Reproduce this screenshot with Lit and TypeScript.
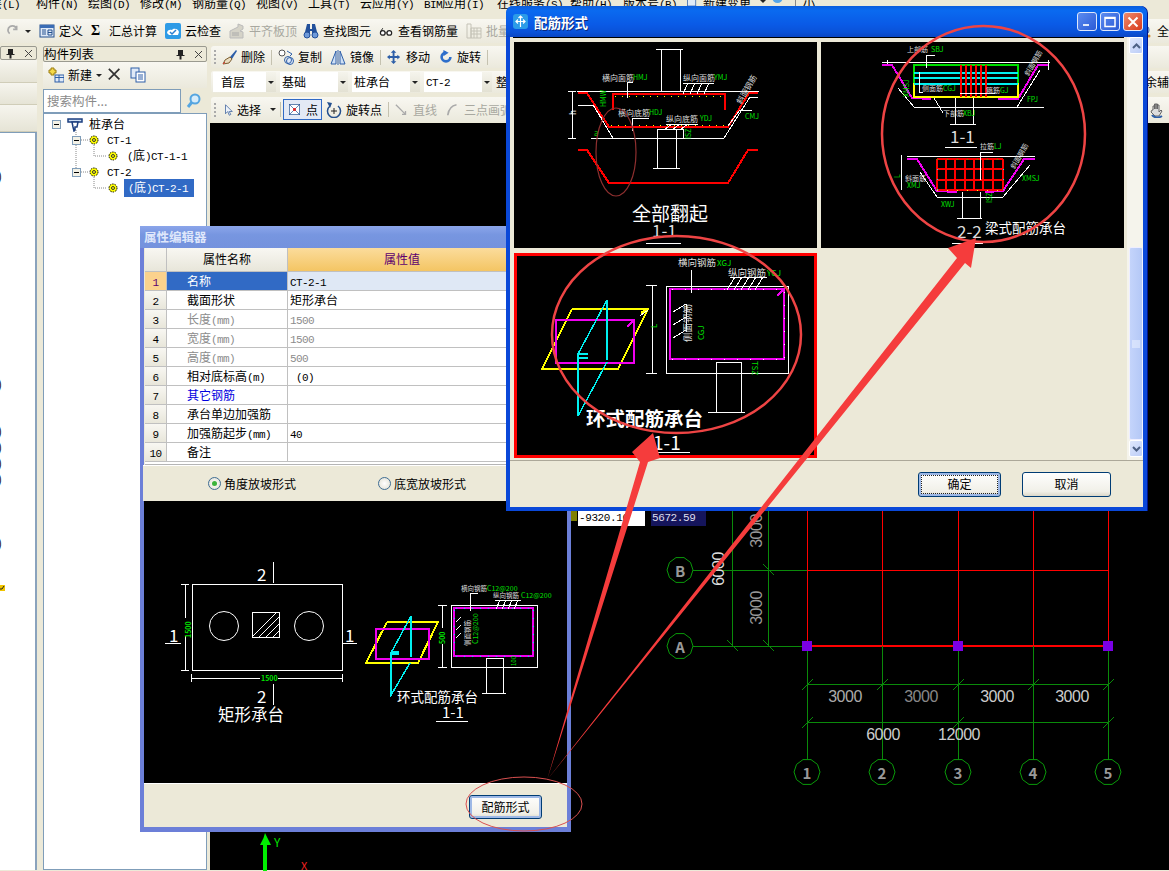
import { LitElement, html, css, svg } from 'lit';
import { customElement } from 'lit/decorators.js';

const CJK = '"Noto Sans CJK SC", "Liberation Sans", sans-serif';

// latin runs are half width in the original bitmap font
const txt = (s: string) =>
  s.split(/([\x00-\x7f]+)/).filter(Boolean).map((r) =>
    /^[\x00-\x7f]/.test(r) ? html`<span class="lat">${r}</span>` : r);

const pl = (p: string, c = '#fff', w = 1) =>
  svg`<polyline points=${p} fill="none" stroke=${c} stroke-width=${w} />`;

const dots = (p: string, c = '#fff', gap = 6) =>
  svg`<polyline points=${p} fill="none" stroke=${c} stroke-width="1" stroke-dasharray="1 ${gap}" />`;

const box = (x: number, y: number, w: number, h: number, c = '#fff', sw = 1) =>
  svg`<rect x=${x} y=${y} width=${w} height=${h} fill="none" stroke=${c} stroke-width=${sw} />`;

const lbl = (x: number, y: number, s: string, c = '#fff', size = 8, rot = 0, weight = 'normal') =>
  svg`<text x=${x} y=${y} fill=${c} font-size=${size} font-weight=${weight} dominant-baseline="central"
    transform=${rot ? `rotate(${rot} ${x} ${y})` : ''}>${s}</text>`;

const G = '#00e000';
const M = '#f000f0';
const C = '#00f0f0';
const Y = '#ffff00';
const R = '#ff0000';

const gon = (cx: number, cy: number, r: number, n = 10) =>
  Array.from({ length: n }, (_, i) => {
    const a = (i / n) * Math.PI * 2 + Math.PI / n;
    return `${(cx + Math.sin(a) * r).toFixed(1)},${(cy + Math.cos(a) * r).toFixed(1)}`;
  }).join(' ');

const icons: Record<string, unknown> = {
  redo: svg`<path d="M3 11a5 5 0 1 1 8-5M11 2v4H7" fill="none" stroke="#aaa" stroke-width="2"/>`,
  define: svg`<rect x="1" y="2" width="14" height="12" fill="#dfe9f7" stroke="#24508f"/><rect x="1" y="2" width="14" height="3" fill="#3a6cb5"/><path d="M3 7h4M3 9h4M3 11h4M9 7h4v5H9zM9 9.500h4" stroke="#24508f" fill="none"/>`,
  cloud: svg`<rect x="0" y="0" width="16" height="16" rx="2" fill="#2e9be6"/><path d="M2 10c0-3 3-4 5-3 1-2 6-2 7 2l-1 3H4z" fill="#fff"/><path d="M5 9l2 2 4-4" stroke="#2b7fd0" stroke-width="1.500" fill="none"/>`,
  flat: svg`<path d="M1 15V8l8-4v-3l5 2v3l-3 2 3 1v6z" fill="#d5d3c8" stroke="#bbb"/><path d="M3 10h7M3 12h7" stroke="#aaa"/>`,
  find: svg`<path d="M4 1h3v5h2V1h3l3 12h-6V8H7v5H1z" fill="#22509b"/><circle cx="4" cy="12" r="3" fill="#6f9ad8" stroke="#22509b"/><circle cx="12" cy="12" r="3" fill="#6f9ad8" stroke="#22509b"/>`,
  glasses: svg`<circle cx="4" cy="10" r="2.500" fill="#fff" stroke="#222" stroke-width="1.300"/><circle cx="11" cy="10" r="2.500" fill="#fff" stroke="#222" stroke-width="1.300"/><path d="M6.500 10h2M1.500 9 4 5" stroke="#222" fill="none"/>`,
  batch: svg`<path d="M1 1h4v14H1zM5 5h10v10H5zM5 8h10M5 11h10M8 5v10M11 5v10" fill="none" stroke="#c4c2b6"/>`,
  brush: svg`<path d="M9 8l6-7 1 1-5 8z" fill="#2e5fa8"/><path d="M9 8l2 2-3 4-6 1 2-4z" fill="#e9dcc0" stroke="#7b5c2e"/><path d="M2 15l2-2" stroke="#d33"/>`,
  copy: svg`<circle cx="4" cy="4" r="3" fill="#fff" stroke="#555"/><circle cx="12" cy="12" r="3.500" fill="#dfe9f7" stroke="#2e5fa8"/><circle cx="10" cy="11" r="3.500" fill="none" stroke="#2e5fa8"/><path d="M9 2l5 3-2 2" fill="none" stroke="#2e5fa8"/>`,
  mirror: svg`<path d="M6 2 1 15h5zM10 2l5 13h-5z" fill="#cfe0f5" stroke="#2e5fa8"/><path d="M8 1v15" stroke="#2e5fa8"/>`,
  move: svg`<path d="M7 0l3 3H8v3.500h3V5l3 2.500L11 10V8.500H8V12h2l-3 3-3-3h2V8.500H3V10L0 7.500 3 5v1.500h3V3H4z" fill="#2e5fa8"/>`,
  rotate: svg`<path d="M13 8a5 5 0 1 1-5-5" fill="none" stroke="#2e6fcb" stroke-width="3"/><path d="M5 0l6 3-6 4z" fill="#2e6fcb"/>`,
  cursor: svg`<path d="M2 1v12l3-3 2 5 2-1-2-4h4z" fill="#eef3fb" stroke="#3a5f9a"/>`,
  point: svg`<rect x="0.500" y="0.500" width="15" height="15" fill="#fff" stroke="#24508f"/><path d="M1 1l14 14M15 1 1 15" stroke="#24508f"/><rect x="6" y="6" width="4" height="4" fill="#e02020"/>`,
  rotpt: svg`<path d="M12 4a6.500 6.500 0 1 1-8 0" fill="none" stroke="#24508f" stroke-width="1.500"/><path d="M1 0l5 1-2 5z" fill="#24508f"/><path d="M8 6v6M5 9h6" stroke="#222"/>`,
  line: svg`<path d="M1 2l11 11M12 9v4H8" fill="none" stroke="#aaa" stroke-width="1.500"/>`,
  arc: svg`<path d="M2 14C3 7 6 3 12 2" fill="none" stroke="#aaa" stroke-width="2"/>`,
  newc: svg`<path d="M3 1h3v2h2v3H6v2H3V6H1V3h2z" fill="#f5d94a" stroke="#9a7d10"/><rect x="7" y="8" width="9" height="7" fill="#dfe9f7" stroke="#2e5fa8"/><path d="M7 10.500h9M11 8v7" stroke="#2e5fa8"/>`,
  del: svg`<path d="M1 1l12 12M13 1 1 13" stroke="#333" stroke-width="2"/>`,
  clone: svg`<rect x="1" y="1" width="8" height="10" fill="#dfe9f7" stroke="#2e5fa8"/><rect x="6" y="5" width="9" height="10" fill="#fff" stroke="#2e5fa8"/><path d="M8 8h5M8 10h5M8 12h5" stroke="#2e5fa8"/>`,
  search: svg`<circle cx="9" cy="6" r="4.500" fill="#d7ecfa" stroke="#55a5e0" stroke-width="2"/><path d="M6 9l-4 5" stroke="#55a5e0" stroke-width="3"/>`,
  pile: svg`<path d="M1 3h14v3H1z" fill="#cfe0f5" stroke="#1d3f80" stroke-width="1.500"/><path d="M5 6h6l-1 5H8v3l-1 1-1-4z" fill="#fff" stroke="#1d3f80" stroke-width="1.500"/>`,
  hand: svg`<path d="M4 8V4h1.500v3V2H7v5V2h1.500v5V3H10v7l2-2 1 1-3 5H6L2 10l1-2z" fill="#ddd" stroke="#666"/><path d="M3 13c2 3 7 3 10 1" stroke="#2e5fa8" fill="none" stroke-width="2"/>`,
  mag: svg`<circle cx="6" cy="7" r="5" fill="#c9d8ee" stroke="#2e5fa8"/><circle cx="11" cy="13" r="1.500" fill="#d08a2a"/>`,
  doc: svg`<rect x="2" y="0" width="11" height="16" fill="#dfe9f7" stroke="#2e5fa8"/><circle cx="11" cy="5" r="3" fill="#3cb43c"/>`,
  bird: svg`<circle cx="8" cy="5" r="7" fill="#55a5e8"/><circle cx="5.500" cy="3" r="1.500" fill="#fff"/><circle cx="10.500" cy="3" r="1.500" fill="#fff"/>`,
};

const ic = (k: string, w = 16, h = 16) =>
  html`<svg class="ic" width=${w} height=${h} viewBox="0 0 16 16">${icons[k]}</svg>`;

const gear = html`<svg class="ic" width="10" height="10" viewBox="0 0 10 10">
  <circle cx="5" cy="5" r="4" fill="#ffff00" stroke="#000" stroke-dasharray="1.500 1"/>
  <circle cx="5" cy="5" r="1.500" fill="#ffff00" stroke="#333"/>
</svg>`;

const expander = html`<svg class="ic" width="9" height="9" viewBox="0 0 9 9">
  <rect x=".5" y=".5" width="8" height="8" fill="#f3f1e6" stroke="#7f9db9"/><path d="M2 4.500h5" stroke="#000"/>
</svg>`;

const paneClose = html`<span class="pin">
  <svg class="ic" width="9" height="11" viewBox="0 0 9 11"><path d="M2 1h5v5h1.500v1h-3v3.500h-2V7h-3V6H2z" fill="#222"/></svg>
  <svg class="ic" width="9" height="9" viewBox="0 0 9 9"><path d="M1 1l7 7M8 1 1 8" stroke="#444"/></svg>
</span>`;

const menu = ['层(L)', '构件(N)', '绘图(D)', '修改(M)', '钢筋量(Q)', '视图(V)', '工具(T)', '云应用(Y)', 'BIM应用(I)', '在线服务(S)', '帮助(H)', '版本号(B)'];

const rows: [string, string, string?][] = [
  ['名称', 'CT-2-1'],
  ['截面形状', '矩形承台'],
  ['长度(mm)', '1500', 'off'],
  ['宽度(mm)', '1500', 'off'],
  ['高度(mm)', '500', 'off'],
  ['相对底标高(m)', ' (0)'],
  ['其它钢筋', '', 'link'],
  ['承台单边加强筋', ''],
  ['加强筋起步(mm)', '40'],
  ['备注', ''],
];

const ticks = (pts: [number, number][], back = false, c = '#0a8a0a') =>
  pts.map(([x, y]) => pl(back ? `${x - 5},${y - 6} ${x + 6},${y + 5}` : `${x - 5},${y + 6} ${x + 6},${y - 5}`, c));

const cellAll = svg`
  ${pl('656,49 683,49')}${pl('661,49 661,91')}${pl('680,49 680,91')}
  ${pl('577,91 759,91')}
  ${pl('578,105 593,105 613,138')}${pl('591,138 724,138 750,97 758,97')}
  ${pl('593,105 609,127')}
  ${pl('657,129 657,168')}${pl('676,129 676,168')}${pl('653,168 680,168')}
  ${pl('657,129 683,129 683,138')}
  ${pl('572,91 572,138')}${pl('568,91 576,91')}${pl('568,138 576,138')}
  ${pl('578,93 587,93 609,127 728,127 749,93 758,93', R, 2)}
  ${pl('613,110 613,94 725,94 725,110', R, 2)}
  ${dots('611,125 726,125', Y)}${dots('615,96 724,96', Y)}
  ${pl('578,150 587,150 609,183 728,183 748,150 758,150', R, 2)}
  ${pl('627,98 627,82 633,82')}
  ${pl('683,83 714,83')}${pl('688,83 683,94')}${pl('695,83 690,94')}${pl('702,83 697,94')}${pl('709,83 704,94')}
  ${pl('632,131 632,118 649,118')}${pl('666,124 698,124')}${pl('672,124 664,130')}${pl('680,124 672,130')}${pl('688,124 680,130')}
  ${pl('728,126 740,110 752,110')}
  ${lbl(602, 77, '横向面筋', '#ddd', 8)}${lbl(633, 77, 'HMJ', G, 7)}
  ${lbl(683, 77, '纵向面筋', '#ddd', 8)}${lbl(714, 77, 'YMJ', G, 7)}
  ${lbl(618, 112, '横向底筋', '#ddd', 8)}${lbl(649, 112, 'HDJ', G, 7)}
  ${lbl(666, 118, '纵向底筋', '#ddd', 8)}${lbl(700, 118, 'YDJ', G, 7)}
  ${lbl(745, 116, 'CMJ', G, 7)}
  ${lbl(738, 103, '斜面钢筋', '#ddd', 8, -60)}
  ${lbl(603, 107, 'HMW', G, 7, -90)}${lbl(688, 139, 'ISZ', G, 7, -90)}${lbl(594, 132, 'a', G, 8)}
  ${lbl(572, 115, 'h', '#fff', 8, -90)}
  ${lbl(632, 212, '全部翻起', '#fff', 19)}
  ${lbl(652, 229, '1-1', '#ddd', 17)}${pl('646,243 681,243')}
`;

const cellBeam = svg`
  ${pl('882,62 1050,62')}${pl('914,107 1017,107')}${pl('898,88 914,107')}${pl('1017,107 1044,107')}${pl('1017,107 1040,70')}
  ${pl('955,98 955,124')}${pl('973,98 973,124')}${pl('950,124 976,124')}
  ${pl('887,65 887,60')}${pl('1048,60 1048,70')}
  ${pl('882,65 892,65 912,98 931,99', M, 2)}${pl('998,99 1018,99 1038,65 1048,65', M, 2)}
  ${pl('914,83 914,65 1018,65 1018,83', G, 2)}${pl('914,83 914,97 1018,97 1018,83', Y, 2)}
  ${[73, 78, 84].map((y) => pl(`914,${y} 1018,${y}`, C, 2))}
  ${[961, 966, 971, 976, 981, 986].map((x) => pl(`${x},65 ${x},97`, R, 2))}
  ${pl('926,55 926,68')}${pl('926,55 935,55')}${pl('919,72 919,92 923,92')}
  ${pl('960,93 995,93', '#fff')}${pl('943,113 934,98')}
  ${lbl(907, 49, '上部筋', '#ddd', 7)}${lbl(931, 49, 'SBJ', G, 7)}
  ${lbl(922, 88, '侧面筋', '#ddd', 7)}${lbl(943, 88, 'CGJ', G, 7)}
  ${lbl(986, 90, '箍筋', '#ddd', 7)}${lbl(1000, 90, 'GJ', G, 7)}
  ${lbl(943, 113, '下部筋', '#ddd', 7)}${lbl(963, 113, 'XBJ', G, 7)}
  ${lbl(1027, 99, 'FPJ', G, 7)}${lbl(1026, 75, '斜面钢筋', '#ddd', 7, -60)}
  ${lbl(906, 97, 'XMSJ', G, 7, -90)}
  ${lbl(950, 135, '1-1', '#ddd', 17)}${pl('945,147 977,147')}
  ${pl('907,156 1035,156')}${pl('937,197 1003,197')}${pl('920,172 937,197')}${pl('1003,197 1030,165')}
  ${pl('962,192 962,218')}${pl('980,192 980,218')}${pl('957,218 982,218')}
  ${pl('907,159 917,159 937,191 957,192', M, 2)}${pl('985,192 1003,191 1024,159 1035,159', M, 2)}
  ${[937, 946, 955, 965, 974, 983, 993, 1003].map((x) => pl(`${x},159 ${x},190`, R, 2))}
  ${[159, 169, 180, 190].map((y) => pl(`937,${y} 1003,${y}`, R, 2))}
  ${dots('937,159 1003,159', G, 9)}${dots('937,190 1003,190', Y, 9)}${dots('937,169 937,190', C, 9)}${dots('1003,169 1003,190', C, 9)}
  ${pl('980,152 980,180')}${pl('980,152 993,152')}
  ${lbl(980, 146, '拉筋', '#ddd', 7)}${lbl(994, 146, 'LJ', G, 7)}
  ${lbl(905, 178, '斜面筋', '#ddd', 7)}${lbl(907, 185, 'XMJ', G, 7)}
  ${lbl(1022, 178, 'XMSJ', G, 7)}${lbl(941, 204, 'XWJ', G, 7)}
  ${lbl(989, 203, 'ISZ', G, 7, -90)}${lbl(1012, 168, '斜面钢筋', '#ddd', 7, -60)}
  ${lbl(897, 178, 'L', G, 7, -90)}${pl('901,155 901,190')}
  ${lbl(957, 230, '2-2', '#ddd', 17)}${pl('952,243 983,243')}
  ${lbl(985, 227, '梁式配筋承台', '#fff', 13.500)}
`;

const cellRing = svg`
  ${pl('572,309 648,309 618,369 542,369 572,309', Y, 2)}
  ${pl('640,316 648,310')}${pl('641,313 647,309', Y, 2)}
  ${box(556, 320, 78, 43, M, 2)}
  ${pl('627,327 633,321', M, 2)}
  ${pl('607,300 607,360', C, 2)}${pl('607,300 578,354 578,416 607,362', C, 1.500)}
  ${pl('578,354 588,354', C, 2)}${pl('578,358 588,358', C, 2)}
  ${pl('652,285 652,373')}${pl('646,285 657,285')}${pl('646,373 657,373')}
  ${lbl(653, 328, 'L', G, 8, -90)}
  ${box(666, 286, 122, 87)}
  ${box(670, 289, 114, 70, M, 2)}
  ${pl('777,296 783,290', M, 2)}
  ${dots('672,289 782,289', '#fff', 12)}${dots('672,359 782,359', '#fff', 12)}${dots('784,292 784,358', '#fff', 12)}
  ${pl('716,362 741,362')}${pl('716,362 716,412')}${pl('741,362 741,412')}${pl('708,412 745,412')}
  ${pl('691,293 691,270')}
  ${pl('730,277 767,277')}${[735, 742, 749, 756, 763].map((x) => pl(`${x},277 ${x - 8},290`))}
  ${[312, 325, 338].map((y) => pl(`686,${y - 8} 673,${y}`))}${pl('686,304 686,332')}
  ${lbl(678, 262, '横向钢筋', '#ddd', 9.500)}${lbl(717, 262, 'XGJ', G, 8)}
  ${lbl(728, 272, '纵向钢筋', '#ddd', 9.500)}${lbl(767, 272, 'YGJ', G, 8)}
  ${lbl(687, 342, '侧面钢筋', '#ddd', 9.500, -90)}${lbl(700, 340, 'CGJ', G, 8, -90)}
  ${lbl(755, 361, 'TSZ', G, 8, 90)}
  ${lbl(586, 417, '环式配筋承台', '#fff', 19.500, 0, 'bold')}
  ${lbl(653, 441, '1-1', '#fff', 19)}${pl('653,452 690,452')}
`;

const propCad = svg`
  ${box(192, 584, 150, 86)}
  <circle cx="224" cy="626" r="14.500" fill="none" stroke="#fff"/>
  <circle cx="309" cy="626" r="14.500" fill="none" stroke="#fff"/>
  ${box(252, 612, 27, 25)}
  ${[0, 1, 2, 3, 4].map((i) => pl(`${252 + i * 7},${637} ${Math.min(279, 252 + 25 + i * 7)},${612 + Math.max(0, i * 7 - 2)}`))}
  ${pl('273,562 273,583')}${pl('273,684 273,705')}
  ${lbl(257, 573, '2', '#fff', 17)}${lbl(257, 695, '2', '#fff', 17)}
  ${lbl(169, 634, '1', '#fff', 17)}${pl('165,643 181,643')}
  ${lbl(345, 634, '1', '#fff', 17)}${pl('342,643 357,643')}
  ${pl('185,584 185,670')}${pl('181,584 189,584')}${pl('181,670 189,670')}
  ${pl('191,678 342,678')}${pl('191,674 191,682')}${pl('342,674 342,682')}
  <rect x="181" y="618" width="8" height="18" fill="#000"/>
  <rect x="260" y="674" width="18" height="8" fill="#000"/>
  ${lbl(188, 638, '1500', G, 7, -90, 'bold')}${lbl(261, 678, '1500', G, 7, 0, 'bold')}
  ${lbl(218, 714, '矩形承台', '#fff', 16.500)}
  ${pl('387,622 438,622 418,663 366,663 387,622', Y, 2)}
  ${box(376, 629, 53, 30, M, 2)}
  ${pl('411,616 411,657', C, 2)}${pl('411,616 391,653 391,695 410,663', C, 1.500)}
  <rect x="391" y="651" width="8" height="4" fill="${C}"/>
  ${pl('442,605 442,667')}${pl('438,605 447,605')}${pl('438,667 447,667')}
  <rect x="438" y="628" width="8" height="16" fill="#000"/>
  ${lbl(442, 644, '500', G, 7, -90, 'bold')}
  ${box(451, 605, 86, 62)}
  ${box(454, 608, 79, 48, M, 2)}
  ${dots('456,608 531,608', C, 7)}${dots('456,656 531,656', C, 7)}${dots('454,610 454,654', C, 7)}${dots('533,610 533,654', C, 7)}
  ${pl('486,658 503,658')}${pl('486,658 486,693')}${pl('503,658 503,693')}${pl('482,693 506,693')}
  ${pl('470,611 470,593 478,593')}${pl('495,600 521,600')}
  ${[500, 506, 512, 518].map((x) => pl(`${x},600 ${x - 4},609`))}
  ${[622, 630, 638].map((y) => pl(`461,${y - 5} 456,${y}`))}
  ${lbl(461, 588, '横向钢筋', '#ddd', 6.500)}${lbl(487, 588, 'C12@200', G, 7)}
  ${lbl(493, 595, '纵向钢筋', '#ddd', 6.500)}${lbl(521, 595, 'C12@200', G, 7)}
  ${lbl(467, 646, '侧面钢筋', '#ddd', 6.500, -90)}${lbl(475, 644, 'C12@200', G, 7, -90)}
  ${lbl(513, 666, '100', G, 6, -90)}
  ${lbl(397, 696, '环式配筋承台', '#fff', 13.500)}
  ${lbl(442, 711, '1-1', '#fff', 15)}${pl('436,721 468,721')}
`;

const grid = svg`
  ${[807, 882, 958, 1033, 1108].map((x) => pl(`${x},510 ${x},646`, '#ff0000'))}
  ${pl('807,570 1108,570', R)}${pl('807,646 1108,646', R, 1.500)}
  ${pl('693,570 807,570', '#0a8a0a')}${pl('693,646 807,646', '#0a8a0a')}
  ${[807, 882, 958, 1033, 1108].map((x) => pl(`${x},646 ${x},759`, '#0a8a0a', 1))}
  ${pl('732,510 732,646', '#0a8a0a')}${pl('768,510 768,646', '#0a8a0a')}
  ${pl('807,684 1108,684', '#0a8a0a')}${pl('807,722 1108,722', '#0a8a0a')}
  ${ticks([[807, 684], [882, 684], [958, 684], [1033, 684], [1108, 684], [807, 722], [958, 722], [1108, 722]])}
  ${ticks([[732, 646], [768, 646], [768, 570]], true)}
  ${[807, 882, 958, 1033, 1108].map((x, i) => svg`
    <polygon points=${gon(x, 772, 13)} fill="none" stroke="#0a9a0a"/>
    ${svg`<text x=${x} y=${772} text-anchor="middle" dominant-baseline="central" font-size="15" font-weight="bold" fill="#999">${i + 1}</text>`}`)}
  ${[['A', 646], ['B', 570]].map(([t, y]) => svg`
    <polygon points=${gon(680, y as number, 13)} fill="none" stroke="#0a9a0a"/>
    <text x="680" y=${y} text-anchor="middle" dominant-baseline="central" font-size="15" font-weight="bold" fill="#999">${t}</text>`)}
  ${[807, 958, 1108].map((x) => svg`<rect x=${x - 5} y="641" width="10" height="10" fill="#7a00e6"/>`)}
  ${[[845, 696, '3000', '#aaa'], [921, 696, '3000', '#888'], [997, 696, '3000', '#ccc'], [1072, 696, '3000', '#ccc'], [883, 734, '6000', '#ccc'], [959, 734, '12000', '#ccc']].map(
    ([x, y, t, c]) => svg`<text class="dim" x=${x} y=${y} text-anchor="middle" dominant-baseline="central" fill=${c}>${t}</text>`)}
  ${[[718, 569, '6000', '#ddd'], [756, 608, '3000', '#999'], [756, 531, '3000', '#999'], [718, 470, '12000', '#ddd']].map(
    ([x, y, t, c]) => svg`<text class="dim" x=${x} y=${y} text-anchor="middle" dominant-baseline="central" fill=${c} transform="rotate(-90 ${x} ${y})">${t}</text>`)}
  <rect x="571" y="511" width="6" height="10" fill="#808000"/>
  <rect x="578" y="511" width="67" height="15" fill="#fff"/>
  <text x="579" y="518" dominant-baseline="central" class="coord" fill="#000">-9320.10</text>
  <rect x="651" y="511" width="55" height="15" fill="#15155c"/>
  <text x="652" y="518" dominant-baseline="central" class="coord" fill="#dde">5672.59</text>
  <rect x="263" y="845" width="4" height="26" fill="#00f000"/>
  <path d="M265 833l-1.500 5-1.500 3-2 4h11l-2-4-1.500-3z" fill="#00f000"/>
  <text x="274" y="841" dominant-baseline="central" font-size="12" fill="#00e000">Y</text>
  <text x="301" y="865" dominant-baseline="central" font-size="11" fill="#f02020">X</text>
`;

@customElement('app-root')
export class AppRoot extends LitElement {
  static styles = css`
    :host {
      display: block;
      width: 1169px;
      height: 871px;
      position: relative;
      overflow: hidden;
      background: #ece9d8;
      color: #000;
      font: 12px/16px "Noto Sans CJK SC", "Liberation Sans", sans-serif;
    }
    .lat { font-family: "Liberation Mono", monospace; font-size: 11px; letter-spacing: -0.6px; }
    .ic { flex: none; display: block; }

    .menu {
      height: 19px; overflow: hidden; display: grid;
      grid-template-columns: 36px 52px 52px 52px 64px 52px 52px 64px 73px 73px 53px 63px 17px 57px 10px 25px 8px 40px;
      align-items: start; background: #ece9d8; line-height: 6px; white-space: nowrap;
    }
    .menu > span:first-child { margin-left: -10px; }
    .menu .ic { margin-top: -6px; }
    .menu .vbar { width: 1px; height: 12px; background: #888; }
    .tb {
      height: 24px; display: flex; align-items: center; gap: 8px; overflow: hidden; white-space: nowrap;
      background: linear-gradient(#f8f7f1, #ebe9dc);
    }
    .tb-main { padding-left: 7px; margin-bottom: 2px; }
    .tb-main .caret { margin-left: -4px; }
    .tb .t { display: flex; align-items: center; gap: 4px; flex: none; }
    .tb-main .pull { margin-left: -2px; }
    .tb-main .sigma { width: 14px; font-size: 14px; font-family: "Liberation Serif", serif; }
    .off { color: #a8a8a0; }
    .sep { width: 1px; height: 15px; background: #c5c2b0; flex: none; }
    .grip { width: 2px; height: 14px; flex: none; border-left: 2px dotted #aaa; margin-right: -3px; }
    .caret { width: 0; height: 0; border: 3px solid transparent; border-top: 3px solid #222; border-bottom: 0; flex: none; }
    .tb-far { margin-left: auto; display: flex; align-items: center; gap: 3px; flex: none; }

    .work { display: flex; height: 825px; }
    .pane-title {
      height: 14px; margin-top: 1px; display: flex; align-items: center; justify-content: space-between;
      border: 1px solid #9a9a90; border-radius: 2px; padding: 0 3px 0 0; font-size: 12.500px;
      background: #ece9d8; line-height: 14px;
    }
    .pin { display: flex; gap: 9px; align-items: center; }
    .left { width: 37px; flex: none; display: flex; flex-direction: column; }
    .band { flex: none; background: linear-gradient(#f6f5ee, #e6e4d6); border-bottom: 1px solid #d0cdb8; box-sizing: border-box; }
    .b1 { height: 23px; margin-top: 0; }
    .b2 { height: 22px; }
    .b3 { height: 27px; }
    .left-list { flex: 1; background: #fff; border-top: 1px solid #7f9db9; border-right: 2px solid #8aa3bd; }
    .left-list svg { display: block; }
    .list { width: 164px; margin-left: 6px; flex: none; display: flex; flex-direction: column; }
    .list-tools { height: 26px; display: flex; align-items: center; padding-left: 5px; gap: 4px; background: linear-gradient(#f8f7f1, #ebe9dc); }
    .list-tools .m2 { margin-left: 2px; }
    .list-tools .m4 { margin-left: 4px; }
    .search { height: 25px; display: flex; gap: 5px; align-items: center; background: #ece9d8; }
    .search .in {
      width: 133px; height: 22px; background: #fff; border: 1px solid #7f9db9; padding-left: 3px;
      color: #8a8a8a; font-size: 12.500px; line-height: 22px; box-sizing: content-box;
    }
    .tree { flex: 1; position: relative; background: #fff; border: 1px solid #7f9db9; padding-top: 2px; }
    .node { height: 16px; display: flex; align-items: center; gap: 5px; white-space: nowrap; position: relative; }
    .n0 { padding-left: 8px; gap: 6px; }
    .n1 { padding-left: 28px; }
    .n2 { padding-left: 64px; }
    .n1 .ic:first-child { margin-right: 3px; }
    .n1 .ic:nth-child(2) { margin-right: 3px; }
    .n2 .ic { margin-right: 4px; }
    .node .sel { background: #316ac5; color: #fff; padding: 0 6px 0 4px; margin-left: -3px; }
    .tree-lines { position: absolute; left: 0; top: 0; pointer-events: none; }

    .main { flex: 1; margin-left: 3px; display: flex; flex-direction: column; min-width: 0; }
    .main .tb { height: 22px; margin-top: 1px; margin-left: 1px; padding-left: 3px; gap: 6px; border-radius: 3px 0 0 3px; }
    .main .tb.selects { margin-top: 3px; height: 22px; gap: 4px; padding-left: 2px; }
    .main .tb.draw { margin-top: 4px; height: 25px; }
    .mirror { margin-left: 2px; }
    .rot { margin-left: 3px; }
    .pick {
      width: 68px; height: 20px; flex: none; background: #fff; display: flex; align-items: center; justify-content: space-between;
      box-sizing: border-box; padding-left: 2px;
    }
    .pick:first-child { width: 63px; padding-left: 8px; }
    .pick i {
      width: 10px; height: 20px; background: linear-gradient(#f5f4ec, #e3e1d3); display: flex; align-items: center; justify-content: center;
    }
    .draw .pickt { margin-left: 3px; }
    .draw .pickt span { margin-left: -3px; }
    .draw .caret { margin: 0 -2px 0 3px; }
    .draw .pressed {
      border: 1px solid #316ac5; background: #e3e9f5; height: 21px; width: 39px; padding-left: 5px; box-sizing: border-box; gap: 6px;
      margin-left: -4px;
    }
    .draw .pull { margin-left: -2px; }
    .draw .arcs { margin-left: 3px; }
    .draw .tb-far { padding-right: 4px; }
    .canvas { flex: 1; background: #000; min-height: 0; margin-top: 1px; }
    .canvas svg { display: block; }

    svg text { font-family: "Noto Sans CJK SC", "Liberation Sans", sans-serif; }
    .cad line, .cad polyline, .cad rect { shape-rendering: crispEdges; }
    .canvas text.dim { font-family: "Liberation Sans", sans-serif; font-size: 16px; letter-spacing: -0.5px; }
    .canvas text.coord { font-family: "Liberation Mono", monospace; font-size: 11px; letter-spacing: -0.4px; }

    .win { position: absolute; box-sizing: border-box; display: flex; flex-direction: column; }
    .prop {
      left: 140px; top: 226px; width: 431px; height: 606px; border: 4px solid #6c7fd8; border-top: 0; border-bottom-width: 5px; background: #ece9d8;
      border-radius: 3px 3px 0 0;
    }
    .prop-title {
      height: 22px; flex: none; margin: 0 -4px; padding: 2px 0 0 4px; box-sizing: border-box;
      background: linear-gradient(#8ba5ea, #7796e0 40%, #7492dd);
      color: #dfe7fb; font-weight: bold; font-size: 12.500px; line-height: 18px;
    }
    .pgrid {
      flex: none; height: 217px; background: #fff; margin-left: 1px; overflow: hidden;
      display: grid; grid-template-columns: 22px 121px 1fr; grid-template-rows: 24px; grid-auto-rows: 19px; border-bottom: 1px solid #b5b5b5; box-sizing: border-box;
    }
    .pgrid > div { border-right: 1px solid #c0c0c0; border-bottom: 1px solid #c0c0c0; box-sizing: border-box; line-height: 18px; white-space: pre; overflow: hidden; }
    .pgrid .hd { background: linear-gradient(#f8f7f2, #e8e6da); text-align: center; line-height: 22px; }
    .pgrid .hd.cur { background: linear-gradient(#fbdc9c, #f4c563); color: #5d0070; padding-right: 50px; }
    .pgrid .num { background: linear-gradient(#f8f7f2, #e8e6da); text-align: center; }
    .pgrid .num.cur { background: #fbd28d; color: #5d0070; }
    .pgrid .name { padding-left: 20px; }
    .pgrid .val { padding-left: 2px; }
    .pgrid .sel { background: #316ac5; color: #fff; }
    .pgrid .curv { background: #dfe8f5; }
    .pgrid .gray { color: #8c8c8c; }
    .pgrid .link { color: #0000e0; }
    .radios {
      height: 36px; flex: none; display: flex; align-items: center; padding-left: 65px; gap: 82px;
      border-top: 1px solid #fff; background: #ece9d8; box-sizing: border-box; margin-left: -1px;
    }
    .radio { display: flex; align-items: center; gap: 3px; }
    .radio b {
      width: 11px; height: 11px; border-radius: 50%; border: 1px solid #3f6d94; background: radial-gradient(#fff, #e0ddd0);
      display: flex; align-items: center; justify-content: center;
    }
    .radio b i { width: 5px; height: 5px; border-radius: 50%; background: #3cb43c; }
    .prop-cad { flex: 1; background: #000; min-height: 0; overflow: hidden; }
    .prop-cad svg { display: block; }
    .prop-foot { height: 44px; flex: none; border-top: 1px solid #fff; display: flex; align-items: center; justify-content: flex-end; padding: 3px 25px 0 0; box-sizing: border-box; }
    .xp-btn {
      box-sizing: border-box; height: 25px; border: 1px solid #003c74; border-radius: 3px; background: linear-gradient(#fefefd, #f1f0e8 80%, #dcd8c9);
      display: flex; align-items: center; justify-content: center; font-size: 12px;
    }
    .prop-foot .xp-btn { width: 73px; height: 24px; }
    .xp-def { box-shadow: inset 0 0 0 2px #9db8e6; }
    .foc { outline: 1px dotted #222; outline-offset: -4px; }

    .dlg {
      left: 506px; top: 6px; width: 641px; height: 505px; background: #ece9d8;
      border: 4px solid #0a48d8; border-top: 0; border-radius: 7px 7px 0 0; box-shadow: 1px 0 0 #00138c;
    }
    .dlg-title {
      height: 31px; flex: none; margin: 0 -4px; padding: 0 4px 0 7px; display: flex; align-items: center; gap: 6px;
      background: linear-gradient(#0a5cdc, #0a6af0 15%, #0a5ae6 60%, #0a52d8 85%, #0a46c4);
      color: #fff; font-weight: bold; font-size: 13.500px; text-shadow: 1px 1px 0 #0a2a80; border-radius: 7px 7px 0 0; box-sizing: border-box;
    }
    .dlg-title .ctl { margin-left: auto; display: flex; gap: 3px; }
    .ctl span {
      width: 20px; height: 19px; border: 1px solid #dfe8fb; border-radius: 3px; box-sizing: border-box; background: linear-gradient(135deg, #5c8cf0, #2a5ad6);
      display: flex; align-items: center; justify-content: center; position: relative;
    }
    .ctl .x { background: linear-gradient(135deg, #ee8a6c, #d83a1c); }
    .dlg-body { display: flex; height: 424px; flex: none; border-bottom: 1px solid #aca899; box-sizing: border-box; }
    .gallery {
      width: 611px; flex: none; padding: 4px 0 0 1px; box-sizing: border-box; border-top: 1px solid #000; margin: 0 3px;
      display: grid; grid-template-columns: 303px 303px; grid-template-rows: 206px 205px; gap: 5px 4px; background: #ece9d8;
    }
    .cell { background: #000; box-sizing: border-box; overflow: hidden; }
    .cell svg { display: block; }
    .cell.on { border: 3px solid #f00; }
    .sb { width: 16px; flex: none; background: #f5f4ec; display: flex; flex-direction: column; padding-left: 2px; box-sizing: border-box; }
    .sb .btn { height: 17px; flex: none; background: linear-gradient(135deg, #dfe8fd, #bccdf7); border: 1px solid #fff; box-sizing: border-box; border-radius: 2px; display: flex; align-items: center; justify-content: center; }
    .sb .track { height: 193px; margin-top: 193px; flex: none; background: linear-gradient(90deg, #c4d4fb, #b4c8f6); border: 1px solid #eef; box-sizing: border-box; border-radius: 2px; display: flex; align-items: center; justify-content: center; }
    .dlg-foot { flex: 1; display: flex; align-items: center; justify-content: flex-end; gap: 21px; padding-right: 32px; }

    .over { position: absolute; left: 0; top: 0; pointer-events: none; }
  `;

  render() {
    return html`
      <div class="menu">
        ${menu.map((m) => html`<span>${txt(m)}</span>`)}
        ${ic('doc', 12, 12)}<span>新建变更</span><span class="caret"></span>${ic('bird', 15, 12)}<span class="vbar"></span><span>小</span>
      </div>
      <div class="tb tb-main">
        ${ic('redo', 14, 14)}<span class="caret"></span>
        <span class="t">${ic('define')}定义</span>
        <span class="t"><b class="sigma">Σ</b>汇总计算</span>
        <span class="t">${ic('cloud')}云检查</span>
        <span class="t off">${ic('flat')}平齐板顶</span>
        <span class="t pull">${ic('find')}查找图元</span>
        <span class="t">${ic('glasses', 15, 16)}查看钢筋量</span>
        <span class="t off">${ic('batch')}批量</span>
        <span class="tb-far">${ic('mag')}全</span>
      </div>
      <div class="work">
        <div class="left">
          <div class="pane-title"><span></span>${paneClose}</div>
          <div class="band b1"></div>
          <div class="band b2"></div>
          <div class="band b3"></div>
          <div class="left-list">
            <svg width="35" height="737" viewBox="0 134 35 737" font-size="12">
              ${[176, 384, 431, 447, 463, 479, 543].map((y) => svg`<text x="-2" y=${y} dominant-baseline="central">)</text>`)}
              <rect x="0" y="586" width="5" height="6" fill="#f0c400"/>
              <path d="M0 590h2l2-3" fill="none" stroke="#222"/>
            </svg>
          </div>
        </div>
        <div class="list">
          <div class="pane-title"><span>构件列表</span>${paneClose}</div>
          <div class="list-tools">
            ${ic('newc')}<span>新建</span><span class="caret"></span>
            <span class="m2">${ic('del', 14, 14)}</span><span class="m4">${ic('clone')}</span>
          </div>
          <div class="search"><div class="in">搜索构件...</div>${ic('search')}</div>
          <div class="tree">
            <svg class="tree-lines" width="120" height="90">
              <path d="M32 16v6M32 31v23M37 26h8M37 58h8M50 31v11h13M50 63v11h13" fill="none" stroke="#888" stroke-dasharray="1 1"/>
            </svg>
            <div class="node n0">${expander}${ic('pile', 16, 16)}<span>桩承台</span></div>
            <div class="node n1">${expander}${gear}<span>${txt('CT-1')}</span></div>
            <div class="node n2">${gear}<span>${txt('(底)CT-1-1')}</span></div>
            <div class="node n1">${expander}${gear}<span>${txt('CT-2')}</span></div>
            <div class="node n2">${gear}<span class="sel">${txt('(底)CT-2-1')}</span></div>
          </div>
        </div>
        <div class="main">
          <div class="tb">
            <span class="grip"></span>
            <span class="t">${ic('brush')}删除</span><span class="sep"></span>
            <span class="t">${ic('copy')}复制</span>
            <span class="t mirror">${ic('mirror')}镜像</span><span class="sep"></span>
            <span class="t">${ic('move', 15, 15)}移动</span>
            <span class="t rot">${ic('rotate', 14, 14)}旋转</span><span class="sep"></span>
          </div>
          <div class="tb selects">
            ${['首层', '基础', '桩承台', 'CT-2'].map((s) => html`<div class="pick"><span>${txt(s)}</span><i><span class="caret"></span></i></div>`)}
            <span>整</span>
            <span class="tb-far">余辅</span>
          </div>
          <div class="tb draw">
            <span class="grip"></span>
            <span class="t pickt">${ic('cursor', 12, 16)}<span>选择</span></span>
            <span class="caret"></span><span class="sep"></span>
            <span class="t pressed">${ic('point', 11, 11)}点</span>
            <span class="t pull">${ic('rotpt')}旋转点</span><span class="sep"></span>
            <span class="t off">${ic('line', 14, 14)}直线</span>
            <span class="t off arcs">${ic('arc', 14, 14)}三点画弧</span>
            <span class="tb-far">${ic('hand')}</span>
          </div>
          <div class="canvas">
            <svg class="cad" width="959" height="748" viewBox="210 123 959 748">${grid}</svg>
          </div>
        </div>
      </div>

      <div class="win prop">
        <div class="prop-title">属性编辑器</div>
        <div class="pgrid">
          <div class="hd"></div><div class="hd">属性名称</div><div class="hd cur">属性值</div>
          ${rows.map(([n, v, k], i) => html`
            <div class="num ${i === 0 ? 'cur' : ''}">${txt(String(i + 1))}</div>
            <div class="name ${i === 0 ? 'sel' : ''} ${k === 'off' ? 'gray' : ''} ${k === 'link' ? 'link' : ''}">${txt(n)}</div>
            <div class="val ${i === 0 ? 'curv' : ''} ${k === 'off' ? 'gray' : ''}">${txt(v)}</div>`)}
        </div>
        <div class="radios">
          <span class="radio"><b><i></i></b>角度放坡形式</span>
          <span class="radio"><b></b>底宽放坡形式</span>
        </div>
        <div class="prop-cad">
          <svg class="cad" width="423" height="282" viewBox="144 501 423 282">${propCad}</svg>
        </div>
        <div class="prop-foot"><div class="xp-btn xp-def">配筋形式</div></div>
      </div>

      <div class="win dlg">
        <div class="dlg-title">
          <svg class="ic" width="15" height="15" viewBox="0 0 15 15">
            <rect width="15" height="15" rx="3" fill="#2b9be8"/>
            <path d="M7.500 2v11M3 7.500h9M5 5.500 3 7.500l2 2M10 5.500l2 2-2 2M5.500 4l2-2 2 2" fill="none" stroke="#fff" stroke-width="1.200"/>
          </svg>
          配筋形式
          <div class="ctl">
            <span><svg width="10" height="10"><rect x="1" y="7" width="6" height="2" fill="#dfe8fb"/></svg></span>
            <span><svg width="12" height="12"><rect x="1" y="1.500" width="10" height="9" fill="none" stroke="#fff" stroke-width="1.500"/><rect x="1" y="1" width="10" height="2" fill="#fff"/></svg></span>
            <span class="x"><svg width="12" height="12"><path d="M1.500 1.500l9 9M10.500 1.500l-9 9" stroke="#fff" stroke-width="2"/></svg></span>
          </div>
        </div>
        <div class="dlg-body">
          <div class="gallery">
            <div class="cell"><svg class="cad" width="303" height="206" viewBox="514 42 303 206">${cellAll}</svg></div>
            <div class="cell"><svg class="cad" width="303" height="206" viewBox="821 42 303 206">${cellBeam}</svg></div>
            <div class="cell on"><svg class="cad" width="297" height="199" viewBox="517 256 297 199">${cellRing}</svg></div>
          </div>
          <div class="sb">
            <div class="btn"><svg width="9" height="6"><path d="M1 5l3.500-3.500L8 5" fill="none" stroke="#4d6185" stroke-width="2"/></svg></div>
            <div class="track"><svg width="8" height="8"><path d="M0 1h8M0 3h8M0 5h8M0 7h8" stroke="#eef3ff"/></svg></div>
            <div class="btn"><svg width="9" height="6"><path d="M1 1l3.500 3.500L8 1" fill="none" stroke="#4d6185" stroke-width="2"/></svg></div>
          </div>
        </div>
        <div class="dlg-foot">
          <div class="xp-btn xp-def foc" style="width:83px">确定</div>
          <div class="xp-btn" style="width:89px">取消</div>
        </div>
      </div>

      <svg class="over" width="1169" height="871" viewBox="0 0 1169 871">
        <ellipse cx="616" cy="152" rx="20" ry="44" fill="none" stroke="#8e2f2f" stroke-width="1.200"/>
        <ellipse cx="983.500" cy="134" rx="101.500" ry="108" fill="none" stroke="#ee4444" stroke-width="2.500"/>
        <ellipse cx="676.500" cy="334.500" rx="124.500" ry="98.500" fill="none" stroke="#ee4444" stroke-width="2.500"/>
        <ellipse cx="524" cy="804" rx="58" ry="27" fill="none" stroke="#d95050" stroke-width="1"/>
        <polygon points="547,780 640,462 632,452 653,433 660,458 648,462" fill="#f53c3c"/>
        <polygon points="547,780 957,258 948,248 976,238 971,268 965,263" fill="#f53c3c"/>
      </svg>
    `;
  }
}
